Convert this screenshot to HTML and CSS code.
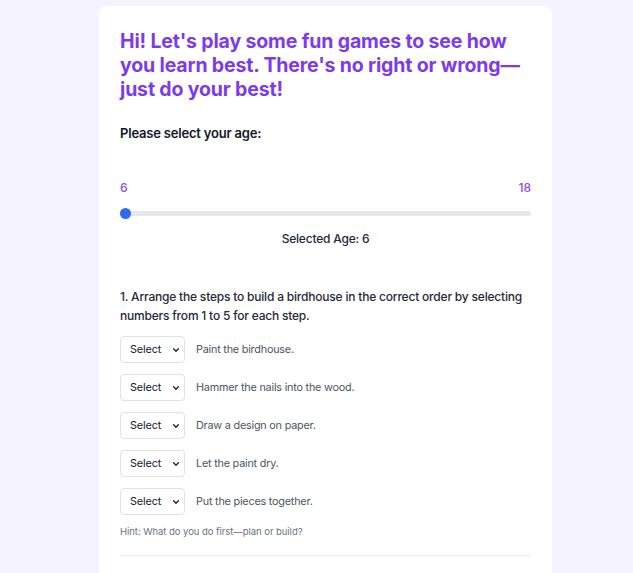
FILE: index.html
```html
<!DOCTYPE html>
<html lang="en">
<head>
<meta charset="utf-8">
<title>Learning Style Games</title>
<link rel="stylesheet" href="styles.css">
</head>
<body>
<main class="card">
  <h1 class="title">Hi! Let's play some fun games to see how you learn best. There's no right or wrong&#8288;—just do your best!</h1>

  <section class="age">
    <label class="age-label" for="age">Please select your age:</label>
    <div class="range-ends"><span>6</span><span>18</span></div>
    <input class="range" id="age" type="range" min="6" max="18" value="6">
    <p class="age-value">Selected Age: 6</p>
  </section>

  <section class="question">
    <p class="question-text">1. Arrange the steps to build a birdhouse in the correct order by selecting numbers from 1 to 5 for each step.</p>
    <ul class="steps">
      <li class="step">
        <span class="select-wrap">
          <select class="select"><option>Select</option><option>1</option><option>2</option><option>3</option><option>4</option><option>5</option></select>
          <svg class="chevron" viewBox="0 0 10 10" width="8" height="8"><path d="M2 3.5 5 6.5 8 3.5" fill="none" stroke="#222" stroke-width="1.6" stroke-linecap="round" stroke-linejoin="round"/></svg>
        </span>
        <span class="step-text">Paint the birdhouse.</span>
      </li>
      <li class="step">
        <span class="select-wrap">
          <select class="select"><option>Select</option><option>1</option><option>2</option><option>3</option><option>4</option><option>5</option></select>
          <svg class="chevron" viewBox="0 0 10 10" width="8" height="8"><path d="M2 3.5 5 6.5 8 3.5" fill="none" stroke="#222" stroke-width="1.6" stroke-linecap="round" stroke-linejoin="round"/></svg>
        </span>
        <span class="step-text">Hammer the nails into the wood.</span>
      </li>
      <li class="step">
        <span class="select-wrap">
          <select class="select"><option>Select</option><option>1</option><option>2</option><option>3</option><option>4</option><option>5</option></select>
          <svg class="chevron" viewBox="0 0 10 10" width="8" height="8"><path d="M2 3.5 5 6.5 8 3.5" fill="none" stroke="#222" stroke-width="1.6" stroke-linecap="round" stroke-linejoin="round"/></svg>
        </span>
        <span class="step-text">Draw a design on paper.</span>
      </li>
      <li class="step">
        <span class="select-wrap">
          <select class="select"><option>Select</option><option>1</option><option>2</option><option>3</option><option>4</option><option>5</option></select>
          <svg class="chevron" viewBox="0 0 10 10" width="8" height="8"><path d="M2 3.5 5 6.5 8 3.5" fill="none" stroke="#222" stroke-width="1.6" stroke-linecap="round" stroke-linejoin="round"/></svg>
        </span>
        <span class="step-text">Let the paint dry.</span>
      </li>
      <li class="step">
        <span class="select-wrap">
          <select class="select"><option>Select</option><option>1</option><option>2</option><option>3</option><option>4</option><option>5</option></select>
          <svg class="chevron" viewBox="0 0 10 10" width="8" height="8"><path d="M2 3.5 5 6.5 8 3.5" fill="none" stroke="#222" stroke-width="1.6" stroke-linecap="round" stroke-linejoin="round"/></svg>
        </span>
        <span class="step-text">Put the pieces together.</span>
      </li>
    </ul>
    <p class="hint">Hint: What do you do first—plan or build?</p>
  </section>
  <hr class="divider">
</main>
</body>
</html>
```

FILE: styles.css
```css
* { box-sizing: border-box; }

body {
  margin: 0;
  background: #f5f3ff;
  font-family: Inter, "Noto Sans", sans-serif;
  color: #1f2937;
}

.card {
  width: 453px;
  min-height: 600px;
  margin: 6px 0 0 99px;
  padding: 23px 21px 40px;
  background: #ffffff;
  border-radius: 8px;
}

.title {
  margin: 0;
  font-size: 19.5px;
  line-height: 24px;
  font-weight: 700;
  letter-spacing: -0.15px;
  color: #7c3aed;
}

/* age slider block */
.age { margin-top: 23px; }

.age-label {
  display: block;
  font-size: 13px;
  line-height: 18px;
  font-weight: 600;
  letter-spacing: -0.2px;
  color: #111827;
}

.range-ends {
  display: flex;
  justify-content: space-between;
  margin-top: 38px;
  font-size: 12px;
  line-height: 16px;
  font-weight: 500;
  color: #8b4ce6;
}

.range {
  -webkit-appearance: none;
  appearance: none;
  display: block;
  width: 100%;
  height: 5px;
  margin: 15px 0 0;
  background: #e5e7eb;
  border-radius: 3px;
  outline: none;
}

.range::-webkit-slider-thumb {
  -webkit-appearance: none;
  width: 11px;
  height: 11px;
  border-radius: 50%;
  background: #2a6bf0;
  border: none;
}

.age-value {
  margin: 15px 0 0;
  text-align: center;
  font-size: 12px;
  line-height: 16px;
  font-weight: 500;
  letter-spacing: -0.2px;
  color: #1f2937;
}

/* question block */
.question { margin-top: 40px; }

.question-text {
  margin: 0;
  font-size: 12px;
  line-height: 19px;
  font-weight: 500;
  letter-spacing: -0.2px;
  color: #1f2937;
}

.steps {
  list-style: none;
  margin: 11px 0 0;
  padding: 0;
  display: flex;
  flex-direction: column;
  gap: 11px;
}

.step {
  display: flex;
  align-items: center;
  gap: 11px;
}

.select-wrap {
  position: relative;
  display: inline-flex;
}

.select {
  -webkit-appearance: none;
  appearance: none;
  width: 65px;
  height: 27px;
  padding: 0 0 0 9px;
  border: 1px solid #dfe2e6;
  border-radius: 4px;
  background: #ffffff;
  font-family: inherit;
  font-size: 10.8px;
  letter-spacing: -0.1px;
  color: #111827;
}

.chevron {
  position: absolute;
  right: 5px;
  top: 10px;
  pointer-events: none;
}

.step-text {
  font-size: 10.8px;
  letter-spacing: -0.2px;
  color: #4b5563;
}

.hint {
  margin: 10px 0 0;
  font-size: 9.5px;
  line-height: 13px;
  letter-spacing: -0.05px;
  color: #6b7280;
}

.divider {
  margin: 17px 0 0;
  border: none;
  border-top: 1px solid #e9eaee;
}
```
